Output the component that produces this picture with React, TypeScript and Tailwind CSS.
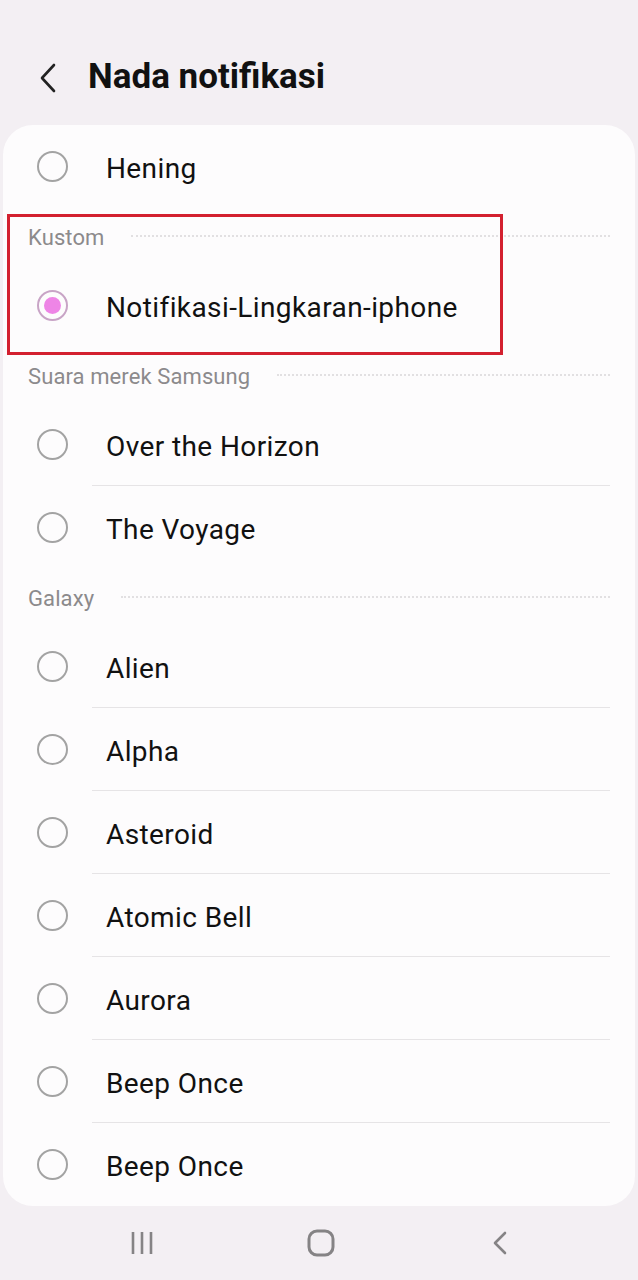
import React from "react";

const font = { fontFamily: "Roboto, 'Noto Sans', sans-serif" };

function Radio({ checked }: { checked?: boolean }) {
  if (checked) {
    return (
      <div className="w-[31px] h-[31px] rounded-full border-[2px] border-[#c8a4c6] flex items-center justify-center shrink-0">
        <div className="w-[17px] h-[17px] rounded-full bg-[#ee85e6]" />
      </div>
    );
  }
  return <div className="w-[31px] h-[31px] rounded-full border-[2px] border-[#a3a3a3] shrink-0" />;
}

function Row({ label, checked, divider }: { label: string; checked?: boolean; divider?: boolean }) {
  return (
    <div className="relative h-[83px] flex items-center pl-[34px]">
      <Radio checked={checked} />
      <span className="ml-[38px] mt-[4px] text-[28px] text-[#111] tracking-[0.4px]">{label}</span>
      {divider && <div className="absolute left-[89px] right-[25px] bottom-0 h-[1.5px] bg-[#e6e4e6]" />}
    </div>
  );
}

function Header({ label }: { label: string }) {
  return (
    <div className="h-[56px] flex items-center pl-[25px] pr-[25px]">
      <span className="mt-[3px] text-[22px] text-[#8c8a8c] tracking-[0.1px]">{label}</span>
      <div className="flex-1 ml-[27px] border-t-[2px] border-dotted border-[#e2e0e2]" />
    </div>
  );
}

export default function App() {
  return (
    <div className="w-[638px] h-[1280px] bg-[#f3eff3] flex flex-col overflow-hidden" style={font}>
      <div className="h-[125px] flex items-center pl-[38px] pt-[30px]">
        <svg width="20" height="32" viewBox="0 0 20 32">
          <path d="M16 3 L4 16 L16 29" fill="none" stroke="#222" strokeWidth="2.6" strokeLinecap="round" strokeLinejoin="round" />
        </svg>
        <h1 className="ml-[30px] text-[35px] font-bold text-[#111]">Nada notifikasi</h1>
      </div>
      <div className="mx-[3px] bg-[#fdfcfd] rounded-[30px] relative">
        <Row label="Hening" />
        <Header label="Kustom" />
        <Row label="Notifikasi-Lingkaran-iphone" checked />
        <div className="absolute left-[4px] top-[89px] w-[496px] h-[141px] border-[3px] border-[#d3202f]" />
        <Header label="Suara merek Samsung" />
        <Row label="Over the Horizon" divider />
        <Row label="The Voyage" />
        <Header label="Galaxy" />
        <Row label="Alien" divider />
        <Row label="Alpha" divider />
        <Row label="Asteroid" divider />
        <Row label="Atomic Bell" divider />
        <Row label="Aurora" divider />
        <Row label="Beep Once" divider />
        <Row label="Beep Once" />
      </div>
      <div className="flex-1 flex items-center pl-[122px] gap-[139px]">
        <div className="w-[40px] flex justify-center">
          <svg width="22" height="24" viewBox="0 0 22 24">
            <path d="M2 1 V23 M11 1 V23 M20 1 V23" stroke="#858385" strokeWidth="2.6" />
          </svg>
        </div>
        <div className="w-[40px] flex justify-center">
          <svg width="28" height="28" viewBox="0 0 28 28">
            <rect x="2" y="2" width="24" height="24" rx="8" fill="none" stroke="#858385" strokeWidth="3" />
          </svg>
        </div>
        <div className="w-[40px] flex justify-center">
          <svg width="16" height="24" viewBox="0 0 16 24">
            <path d="M13 2 L3 12 L13 22" fill="none" stroke="#858385" strokeWidth="2.6" strokeLinecap="round" strokeLinejoin="round" />
          </svg>
        </div>
      </div>
    </div>
  );
}
